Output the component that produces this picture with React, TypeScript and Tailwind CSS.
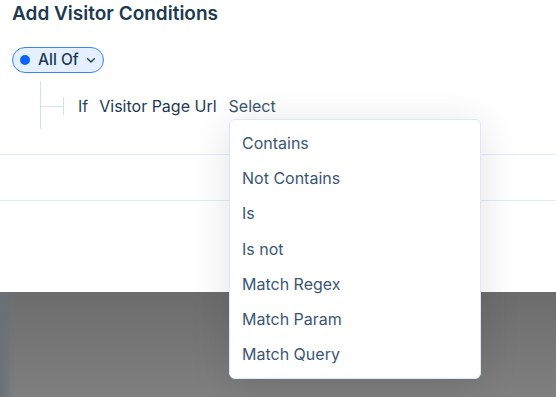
const options = [
  "Contains",
  "Not Contains",
  "Is",
  "Is not",
  "Match Regex",
  "Match Param",
  "Match Query",
];

export default function App() {
  return (
    <div
      className="relative w-[556px] h-[397px] overflow-hidden bg-white text-[#1f3b52]"
      style={{ fontFamily: "Inter, 'Noto Sans', sans-serif" }}
    >
      {/* Panel */}
      <div className="h-[292px] bg-white">
        <h1 className="px-[12px] pt-[1px] text-[19px] leading-[26px] font-semibold text-[#1d3a50]">
          Add Visitor Conditions
        </h1>

        {/* Group selector */}
        <div className="px-[12px] pt-[20px]">
          <button className="flex items-center h-[26px] w-[92px] pl-[7px] rounded-full border border-[#3b82f6] bg-[#e4efff]">
            <span className="w-[10px] h-[10px] rounded-full bg-[#0b63f6]" />
            <span className="ml-[8px] text-[15.5px] font-medium text-[#1d3a50]">All Of</span>
            <svg className="ml-[4px] w-[16px] h-[16px] text-[#1d3a50]" viewBox="0 0 24 24" fill="none" stroke="currentColor" strokeWidth={2} strokeLinecap="round" strokeLinejoin="round">
              <path d="M7 10l5 5 5-5" />
            </svg>
          </button>
        </div>

        {/* Condition row */}
        <div className="flex pl-[40px] pt-[8px]">
          <div className="w-px h-[48px] bg-[#cfe0f7]" />
          <div className="flex items-center h-[50px]">
            <div className="w-[22px] h-px bg-[#cfe0f7]" />
            <div className="w-px h-[18px] bg-[#cfe0f7]" />
            <div className="flex items-center ml-[14px] text-[16px] text-[#2a4560]">
              <span>If</span>
              <span className="ml-[11px] text-[#1d3a50]">Visitor Page Url</span>
              <span className="ml-[12px] text-[#3a5673]">Select</span>
            </div>
          </div>
        </div>

        <div className="mt-[23px] h-px bg-[#e1ecfa]" />
        <div className="mt-[45px] h-px bg-[#e1ecfa]" />
      </div>

      {/* Dimmed backdrop */}
      <div className="h-[105px] bg-gradient-to-b from-[#6c6c6c] to-[#808080]">
        <div className="w-[16px] h-full bg-gradient-to-r from-[#6a7076] to-transparent" />
      </div>

      {/* Dropdown menu */}
      <div className="absolute left-[229px] top-[119px] w-[252px] rounded-[6px] border border-[#dbe8fb] bg-white pt-[5px] pb-[6px] shadow-[0_6px_40px_rgba(0,0,0,0.12)]">
        {options.map((o) => (
          <div key={o} className="h-[35.3px] flex items-center px-[12px] text-[16px] text-[#3a5674]">
            {o}
          </div>
        ))}
      </div>
    </div>
  );
}
